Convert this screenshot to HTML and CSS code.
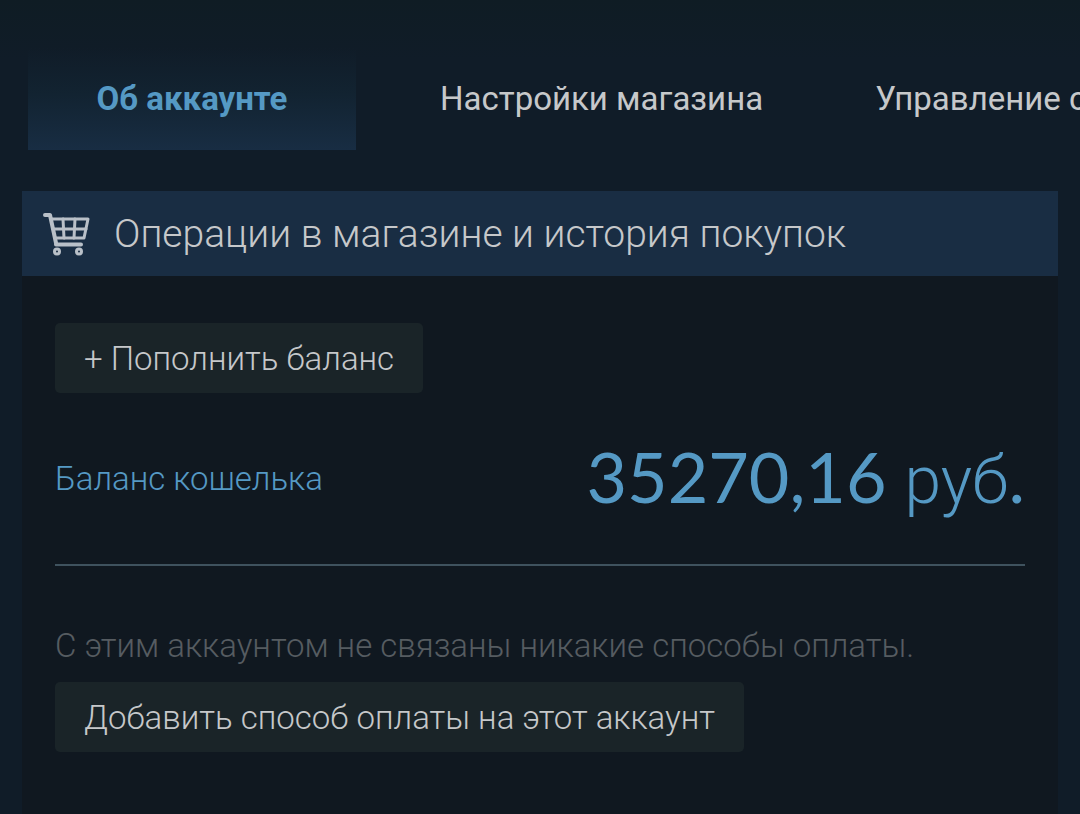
FILE: index.html
```html
<!DOCTYPE html>
<html lang="ru">
<head>
  <meta charset="UTF-8">
  <meta name="viewport" content="width=device-width, initial-scale=1">
  <title>Об аккаунте</title>
  <link rel="stylesheet" href="styles.css">
</head>
<body>
  <nav class="tabs">
    <a class="tab active" href="#">Об аккаунте</a>
    <a class="tab" href="#">Настройки магазина</a>
    <a class="tab" href="#">Управление семьёй</a>
  </nav>

  <main class="block">
    <div class="block-header">
      <svg class="cart" viewBox="0 0 48 46" fill="none" stroke="#b9c0c8" stroke-linecap="round" stroke-linejoin="round" aria-hidden="true">
        <path d="M3 4h5L14 32" stroke-width="4"/>
        <path d="M10 8h36l-4 19H14" stroke-width="3"/>
        <path d="M11 18h33M21 8l1 19M33 8l-1 19" stroke-width="3"/>
        <path d="M14 33.500h25" stroke-width="4"/>
        <circle cx="15" cy="40.500" r="2.500" stroke-width="3"/>
        <circle cx="37" cy="40.500" r="2.500" stroke-width="3"/>
      </svg>
      <h1>Операции в магазине и история покупок</h1>
    </div>

    <div class="block-content">
      <button class="btn" type="button">+ Пополнить баланс</button>

      <div class="balance">
        <a class="balance-label" href="#">Баланс кошелька</a>
        <span class="balance-price">35270,16 <span class="currency">руб</span>.</span>
      </div>

      <p class="note">С этим аккаунтом не связаны никакие способы оплаты.</p>
      <button class="btn" type="button">Добавить способ оплаты на этот аккаунт</button>
    </div>
  </main>
</body>
</html>
```
FILE: styles.css
```css
* {
  box-sizing: border-box;
}
body {
  margin: 0;
  min-height: 100vh;
  display: flex;
  flex-direction: column;
  background: linear-gradient(#0f1c24, #101c28 60px, #101c28);
  color: #c6c8ca;
  font-family: Roboto, "Noto Sans", sans-serif;
  font-size: 33px;
  font-weight: 300;
  overflow-x: hidden;
}
a {
  color: inherit;
  text-decoration: none;
}
.tabs {
  display: flex;
  gap: 56px;
  padding: 48px 28px 0;
  overflow: hidden;
}
.tab {
  flex: none;
  min-width: 328px;
  height: 102px;
  padding: 0 28px;
  line-height: 102px;
  text-align: center;
  white-space: nowrap;
  font-weight: 400;
}
.tab.active {
  color: #5599c4;
  font-weight: 700;
  background: linear-gradient(#10202a00, #122331 45%, #182d43);
}
.block {
  flex: 1;
  display: flex;
  flex-direction: column;
  margin: 41px 22px 0;
}
.block-header {
  display: flex;
  align-items: center;
  gap: 24px;
  height: 85px;
  padding: 0 20px;
  background: #192d43;
}
.block-header h1 {
  margin: 0;
  font-size: 39px;
  font-weight: 300;
}
.cart {
  width: 48px;
  height: 46px;
}
.block-content {
  flex: 1;
  padding: 47px 33px 62px;
  background: #101820;
}
.btn {
  display: block;
  height: 70px;
  padding: 0 29px;
  border: none;
  border-radius: 5px;
  background: #1a2428;
  color: #c6c8ca;
  font: inherit;
  cursor: pointer;
}
.balance {
  display: flex;
  align-items: center;
  justify-content: space-between;
  height: 173px;
  border-bottom: 2px solid #3f525e;
  color: #5599c4;
}
.balance-price {
  font-family: Lato, Roboto, sans-serif;
  font-size: 70px;
  font-weight: 400;
  line-height: 80px;
}
.currency {
  font-family: Roboto, sans-serif;
  font-size: 66px;
  font-weight: 300;
}
.note {
  margin: 60px 0 16px;
  line-height: 40px;
  color: #565c61;
}
```
